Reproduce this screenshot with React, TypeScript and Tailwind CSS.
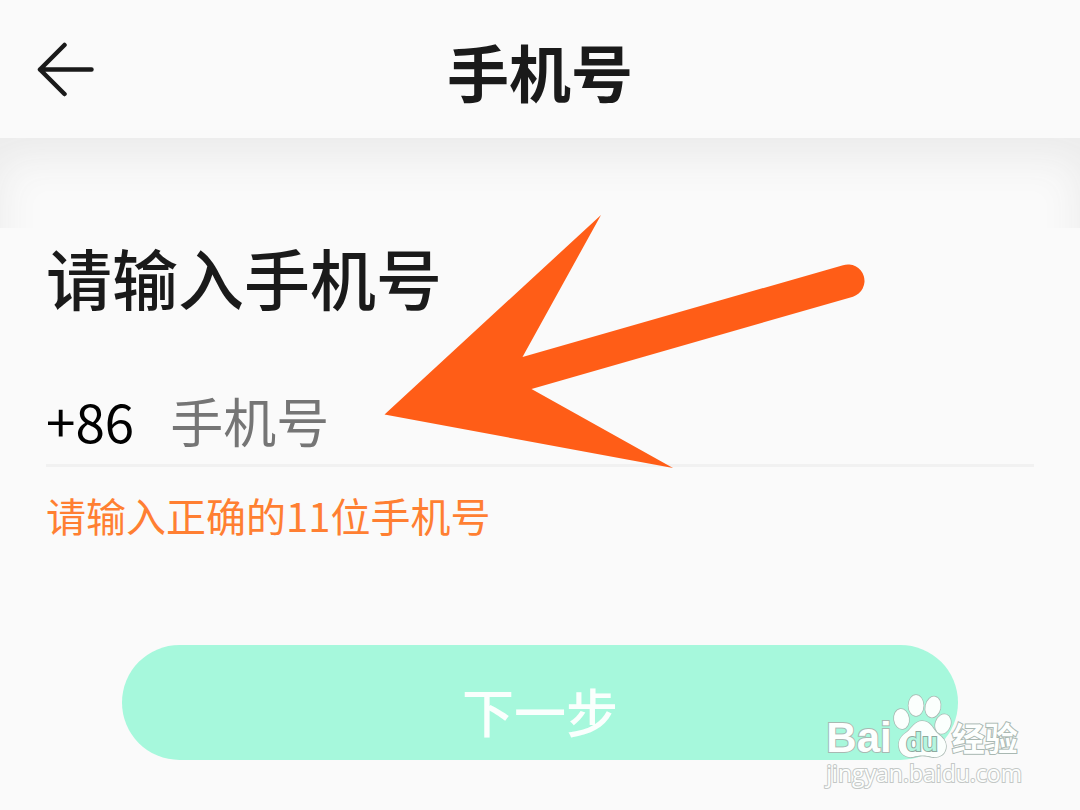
import React, { useState } from "react";

const BackIcon = () => (
  <svg width="60" height="56" viewBox="0 0 60 56" fill="none" aria-hidden="true">
    <path
      d="M29.500 4L5 28.500L29.500 53M5 28.500H56.500"
      stroke="#1a1a1a"
      strokeWidth="4.500"
      strokeLinecap="round"
      strokeLinejoin="round"
    />
  </svg>
);

const PointerArrow = () => (
  <svg
    className="pointer-events-none absolute left-[384px] top-[77px]"
    width="482"
    height="256"
    viewBox="0 0 482 256"
    aria-hidden="true"
  >
    <path
      d="M0.5 199.500L217 0L138.500 142L459 50.200A16.500 16.500 0 0 1 469 81.700L147.500 174L289 253Z"
      fill="#ff5d17"
    />
  </svg>
);

const PawLogo = () => (
  <svg width="60" height="66" viewBox="0 0 60 66" aria-hidden="true">
    <g fill="#fbfffd" stroke="#a9b8b2" strokeWidth="1.500">
      <ellipse cx="9.500" cy="26" rx="7.500" ry="10" transform="rotate(-8 9.5 26)" />
      <ellipse cx="24" cy="12.500" rx="7.500" ry="10.500" />
      <ellipse cx="41" cy="14" rx="7.500" ry="10.500" transform="rotate(12 41 14)" />
      <ellipse cx="51" cy="31" rx="7.500" ry="10" transform="rotate(20 51 31)" />
      <path d="M30 28C23 28 20 35 15 39C9 43 6 47 7 54C8 61 14 65 21 64C27 62 34 62 40 64C48 65 54 61 54 53C54 46 48 43 44 39C40 34 38 28 30 28Z" />
    </g>
    <text
      x="30"
      y="58"
      textAnchor="middle"
      fill="#b4f5df"
      stroke="#8fa9a0"
      strokeWidth="2"
      className="font-['Liberation_Sans',sans-serif] text-[26px] font-bold"
    >
      du
    </text>
  </svg>
);

const Watermark = () => (
  <div className="pointer-events-none absolute right-[58px] top-[555px] text-[#fdfffe] [paint-order:stroke_fill]">
    <div className="flex items-end font-bold [-webkit-text-stroke:2px_#a9b8b2]">
      <span className="font-['Liberation_Sans',sans-serif] text-[42px] leading-[42px]">
        Bai
      </span>
      <PawLogo />
      <span className="text-[33px] leading-[44px]">经验</span>
    </div>
    <div className="font-['Open_Sans',sans-serif] text-[23px] leading-[28px] [-webkit-text-stroke:2px_#c4c8c6]">
      jingyan.baidu.com
    </div>
  </div>
);

export default function PhonePage() {
  const [phone, setPhone] = useState("");

  return (
    <div className="min-h-screen bg-[#fafafa] font-['Noto_Sans_CJK_SC',sans-serif] text-[#1a1a1a]">
      <header className="grid h-[138px] grid-cols-[60px_1fr_60px] items-center px-[35px]">
        <button type="button" aria-label="返回">
          <BackIcon />
        </button>
        <h1 className="pt-1 text-center text-[62px] font-bold leading-[80px]">
          手机号
        </h1>
      </header>
      <main className="relative">
        <div className="h-[90px] overflow-hidden">
          <div className="h-[180px] shadow-[inset_0_20px_40px_#ebebeb]" />
        </div>
        <form
          className="px-[46px] pt-2"
          onSubmit={(e) => e.preventDefault()}
        >
          <h2 className="text-[66px] font-medium leading-[80px]">
            请输入手机号
          </h2>
          <div className="mt-16 flex items-center gap-9 border-b-3 border-[#f1f1f1] pb-1 text-[53px] leading-[80px]">
            <label htmlFor="phone" className="text-black">
              +86
            </label>
            <input
              id="phone"
              type="tel"
              value={phone}
              onChange={(e) => setPhone(e.target.value)}
              placeholder="手机号"
              className="h-20 min-w-0 flex-1 bg-transparent outline-none placeholder:text-[#757575]"
            />
          </div>
          <p className="mt-6 text-[40px] leading-[48px] text-[#ff7f32]">
            请输入正确的11位手机号
          </p>
          <div className="px-[76px] pb-12 pt-[106px]">
            <button
              type="submit"
              className="h-[115px] w-full rounded-full bg-[#a6f8dc] pt-4 text-[52px] font-medium text-[#fafffd]"
            >
              下一步
            </button>
          </div>
        </form>
        <PointerArrow />
        <Watermark />
      </main>
    </div>
  );
}
